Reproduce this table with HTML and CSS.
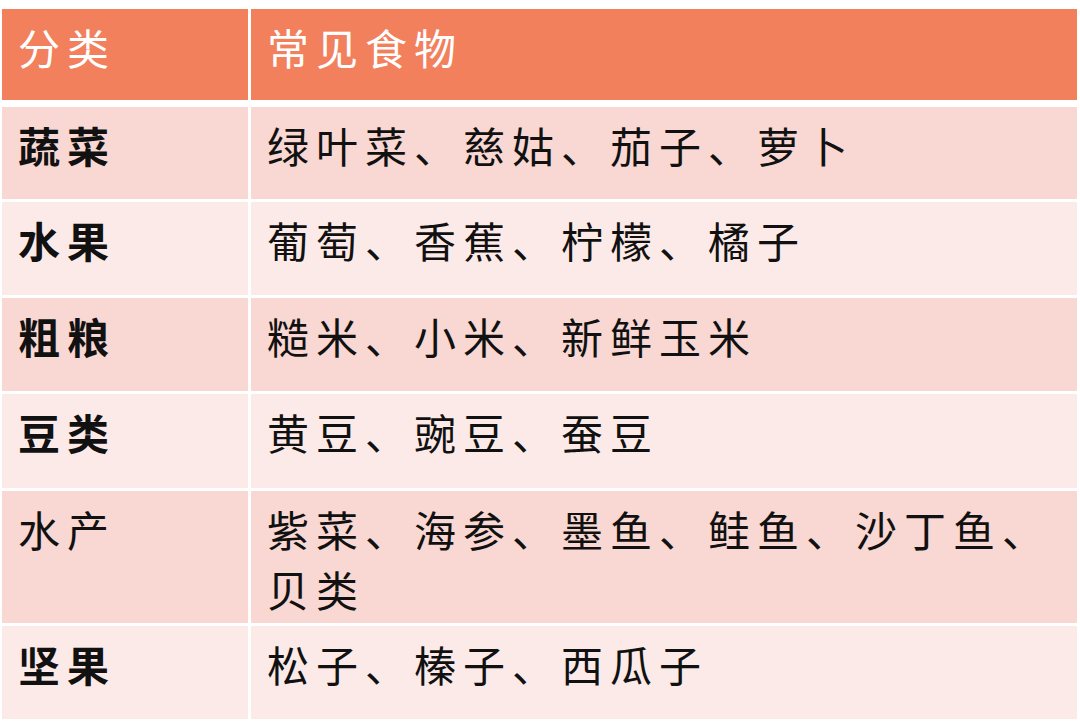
FILE: index.html
```html
<!DOCTYPE html>
<html lang="zh-CN">
<head>
<meta charset="utf-8">
<title>常见食物分类</title>
<link rel="stylesheet" href="styles.css">
</head>
<body>
<div class="table">
  <div class="cell head c1">分类</div>
  <div class="cell head c2">常见食物</div>

  <div class="cell dark c1 cat">蔬菜</div>
  <div class="cell dark c2">绿叶菜、慈姑、茄子、萝卜</div>

  <div class="cell light c1 cat">水果</div>
  <div class="cell light c2">葡萄、香蕉、柠檬、橘子</div>

  <div class="cell dark c1 cat">粗粮</div>
  <div class="cell dark c2">糙米、小米、新鲜玉米</div>

  <div class="cell light c1 cat">豆类</div>
  <div class="cell light c2">黄豆、豌豆、蚕豆</div>

  <div class="cell dark c1 cat cat-thin">水产</div>
  <div class="cell dark c2">紫菜、海参、墨鱼、鲑鱼、沙丁鱼、<br>贝类</div>

  <div class="cell light c1 cat">坚果</div>
  <div class="cell light c2">松子、榛子、西瓜子</div>
</div>
</body>
</html>
```

FILE: styles.css
```css
html, body {
  margin: 0;
  padding: 0;
  background: #ffffff;
}

body {
  font-family: "Noto Sans CJK SC", "Noto Sans CJK JP", sans-serif;
  color: #111111;
}

.table {
  display: grid;
  grid-template-columns: 246px 1fr;
  grid-template-rows: 95px 92px 93px 93px 94px 132px 93px;
  column-gap: 3px;
  row-gap: 3px;
  margin: 9px 3px 0 2px;
}

.cell {
  font-size: 42px;
  line-height: 60px;
  letter-spacing: 7px;
  padding-top: 8px;
  box-sizing: border-box;
}

.c1 {
  padding-left: 16px;
}

.c2 {
  padding-left: 16px;
}

.head {
  background: #f2805d;
  color: #ffffff;
  font-weight: 400;
  margin-bottom: 4px;
}

.dark {
  background: #f9d7d2;
}

.light {
  background: #fceae8;
}

.cat {
  font-weight: 700;
}

.cat-thin {
  font-weight: 400;
}
```
